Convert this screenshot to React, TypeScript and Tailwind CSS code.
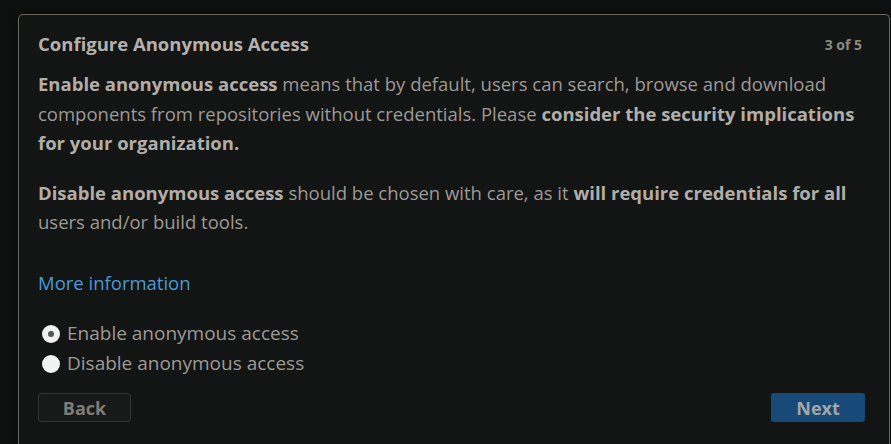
import React, { useState } from 'react';

const font = { fontFamily: '"Open Sans", Lato, sans-serif' };

const App = () => {
  const [mode, setMode] = useState<'enable' | 'disable'>('enable');

  return (
    <div className="min-h-[444px] w-[891px] overflow-hidden bg-[#0f1010] pl-[18px] pt-[14px]" style={font}>
      <div className="h-[440px] w-[872px] rounded-t-[5px] border border-b-0 border-[#6b665e] bg-[#131414] px-[19px] pt-[16px] shadow-[0_0_8px_rgba(0,0,0,0.6)]">
        <div className="flex items-center justify-between">
          <h2 className="text-[18.5px] font-bold leading-[26px] text-[#b4b1ac]">Configure Anonymous Access</h2>
          <span className="mr-[8px] text-[14px] font-bold text-[#8b8781]">3 of 5</span>
        </div>

        <p className="mt-[12px] text-[18.5px] leading-[29.5px] text-[#9d9a95]">
          <b className="text-[#b1aea9]">Enable anonymous access</b> means that by default, users can search, browse and download
          <br />
          components from repositories without credentials. Please{' '}
          <b className="text-[#b1aea9]">consider the security implications</b>
          <br />
          <b className="text-[#b1aea9]">for your organization.</b>
        </p>

        <p className="mt-[20px] text-[18.5px] leading-[29.5px] text-[#9d9a95]">
          <b className="text-[#b1aea9]">Disable anonymous access</b> should be chosen with care, as it{' '}
          <b className="text-[#b1aea9]">will require credentials for all</b>
          <br />
          users and/or build tools.
        </p>

        <a href="#" className="mt-[31px] block text-[18.5px] leading-[29.5px] text-[#4a9bd4]">
          More information
        </a>

        <div className="mt-[22px] flex flex-col gap-[1px] text-[19px] leading-[29px] text-[#9d9a95]">
          {[
            { key: 'enable' as const, label: 'Enable anonymous access' },
            { key: 'disable' as const, label: 'Disable anonymous access' },
          ].map(opt => (
            <label key={opt.key} className="flex items-center gap-[7px] pl-[4px]">
              <span className="flex h-[18px] w-[18px] items-center justify-center rounded-full bg-[#f2f2f2]">
                {mode === opt.key && <span className="h-[6px] w-[6px] rounded-full bg-[#555]" />}
              </span>
              <input
                type="radio"
                name="anon"
                className="hidden"
                checked={mode === opt.key}
                onChange={() => setMode(opt.key)}
              />
              {opt.label}
            </label>
          ))}
        </div>

        <div className="mt-[15px] flex justify-between pr-[5px]">
          <button className="h-[29px] w-[93px] rounded-[3px] border border-[#333434] bg-[#181919] text-[18px] font-bold leading-none text-[#807c76]">
            Back
          </button>
          <button className="h-[29px] w-[94px] rounded-[3px] bg-[#174a78] text-[18px] font-bold leading-none text-[#a5a5a5]">
            Next
          </button>
        </div>
      </div>
    </div>
  );
};

export default App;
